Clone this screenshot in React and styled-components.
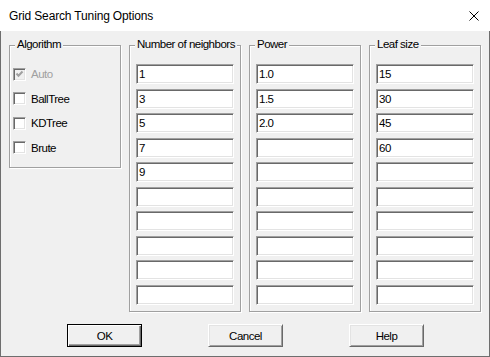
import styled, { createGlobalStyle } from 'styled-components'

const GlobalStyle = createGlobalStyle`
  html, body {
    margin: 0;
    padding: 0;
    background: #f0f0f0;
  }
  body {
    font-family: "Liberation Sans", Arial, sans-serif;
    color: #000;
  }
`

// Ventana completa del diálogo
const Window = styled.div`
  width: 490px;
  height: 357px;
  display: flex;
  flex-direction: column;
`

const TitleBar = styled.div`
  height: 31px;
  flex: none;
  background: #fff;
  display: flex;
  align-items: center;
  justify-content: space-between;
  padding: 0 11px 0 9px;
  font-size: 12px;
  letter-spacing: -0.15px;
`

const Body = styled.div`
  flex: 1;
  background: #f0f0f0;
  border: 1px solid #6e6e6e;
  border-top: none;
  padding: 14px 7px 0 8px;
  display: flex;
  flex-direction: column;
  font-size: 11.5px;
  letter-spacing: -0.5px;
`

const GroupRow = styled.div`
  display: flex;
  align-items: flex-start;
  gap: 8px;
`

// Marco con borde grabado (etched)
const GroupBox = styled.div`
  position: relative;
  box-sizing: border-box;
  width: 112px;
  height: ${(p) => p.$height}px;
  border: 1px solid #a0a0a0;
  box-shadow: inset 1px 1px 0 #fff, 1px 1px 0 #fff;
  padding: 18px ${(p) => p.$padX}px 0;
`

const GroupTitle = styled.span`
  position: absolute;
  top: -8px;
  left: 5px;
  padding: 0 2px;
  line-height: 13px;
  background: #f0f0f0;
  white-space: nowrap;
`

const Stack = styled.div`
  display: flex;
  flex-direction: column;
  gap: 4.5px;
`

const CheckRow = styled.label`
  height: 20px;
  display: flex;
  align-items: center;
  gap: 5px;
  color: ${(p) => (p.$disabled ? '#a0a0a0' : '#000')};
`

const CheckBox = styled.span`
  box-sizing: border-box;
  width: 13px;
  height: 13px;
  flex: none;
  display: flex;
  align-items: center;
  justify-content: center;
  border: 1px solid;
  border-color: #a0a0a0 #fff #fff #a0a0a0;
  box-shadow: inset 1px 1px 0 #696969, inset -1px -1px 0 #e3e3e3;
  background: ${(p) => (p.$disabled ? '#f0f0f0' : '#fff')};
`

const TextField = styled.input`
  box-sizing: border-box;
  width: 98px;
  height: 20px;
  margin: 0;
  padding: 0 0 0 2px;
  border: 1px solid;
  border-color: #a0a0a0 #fff #fff #a0a0a0;
  box-shadow: inset 1px 1px 0 #696969, inset -1px -1px 0 #e3e3e3;
  background: #fff;
  font-family: "Liberation Sans", Arial, sans-serif;
  font-size: 11.5px;
  letter-spacing: -0.5px;
  color: #000;
  outline: none;
`

const ButtonRow = styled.div`
  display: flex;
  justify-content: center;
  gap: 66px;
  margin-top: 12px;
`

const Button = styled.button`
  box-sizing: border-box;
  width: 75px;
  height: 23px;
  margin: 0;
  padding: 0;
  background: #f0f0f0;
  font-family: "Liberation Sans", Arial, sans-serif;
  font-size: 11.5px;
  letter-spacing: -0.5px;
  color: #000;
  border: 1px solid;
  border-color: ${(p) => (p.$default ? '#000' : '#fff #696969 #696969 #fff')};
  box-shadow: ${(p) =>
    p.$default
      ? 'inset 1px 1px 0 #fff, inset -1px -1px 0 #696969, inset -2px -2px 0 #a0a0a0'
      : 'inset 1px 1px 0 #e3e3e3, inset -1px -1px 0 #a0a0a0'};
`

const algorithms = [
  { name: 'Auto', checked: true, disabled: true },
  { name: 'BallTree' },
  { name: 'KDTree' },
  { name: 'Brute' },
]

const columns = [
  { title: 'Number of neighbors', values: ['1', '3', '5', '7', '9'] },
  { title: 'Power', values: ['1.0', '1.5', '2.0'] },
  { title: 'Leaf size', values: ['15', '30', '45', '60'] },
]

function CheckMark() {
  return (
    <svg width="9" height="9" viewBox="0 0 9 9">
      <path d="M1.5 3.5 L3.5 5.8 L7.5 1.5" fill="none" stroke="#a0a0a0" strokeWidth="2" />
    </svg>
  )
}

function CloseIcon() {
  return (
    <svg width="10" height="10" viewBox="0 0 10 10">
      <path d="M0.5 0.5 L9.5 9.5 M9.5 0.5 L0.5 9.5" stroke="#000" strokeWidth="1" />
    </svg>
  )
}

export default function App() {
  return (
    <Window>
      <GlobalStyle />
      <TitleBar>
        <span>Grid Search Tuning Options</span>
        <CloseIcon />
      </TitleBar>
      <Body>
        <GroupRow>
          <GroupBox $height={123} $padX={3}>
            <GroupTitle>Algorithm</GroupTitle>
            <Stack>
              {algorithms.map((a) => (
                <CheckRow key={a.name} $disabled={a.disabled}>
                  <CheckBox $disabled={a.disabled}>{a.checked && <CheckMark />}</CheckBox>
                  {a.name}
                </CheckRow>
              ))}
            </Stack>
          </GroupBox>
          {columns.map((c) => (
            <GroupBox key={c.title} $height={267} $padX={6}>
              <GroupTitle>{c.title}</GroupTitle>
              <Stack>
                {Array.from({ length: 10 }, (_, i) => (
                  <TextField key={i} readOnly value={c.values[i] || ''} />
                ))}
              </Stack>
            </GroupBox>
          ))}
        </GroupRow>
        <ButtonRow>
          <Button $default>OK</Button>
          <Button>Cancel</Button>
          <Button>Help</Button>
        </ButtonRow>
      </Body>
    </Window>
  )
}
